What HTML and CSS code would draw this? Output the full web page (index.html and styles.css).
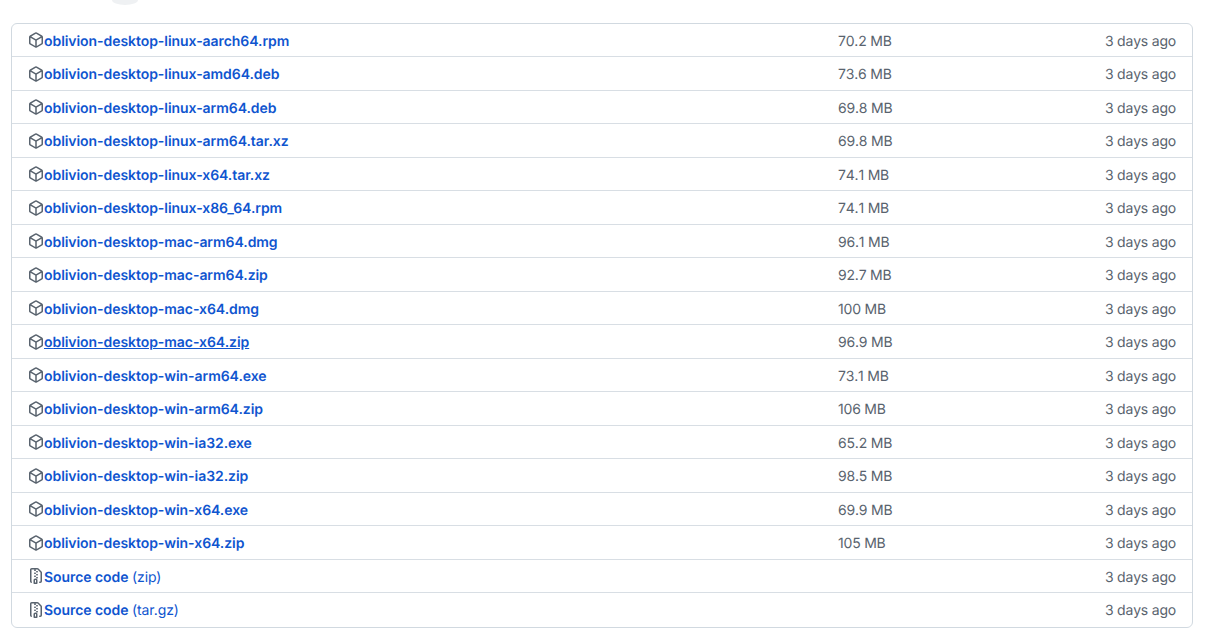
FILE: index.html
```html
<!DOCTYPE html>
<html lang="en">
<head>
<meta charset="utf-8">
<title>Assets</title>
<link rel="stylesheet" href="styles.css">
</head>
<body>
<svg class="sprites" width="0" height="0" aria-hidden="true">
<symbol id="pkg" viewBox="0 0 16 16"><path d="m8.878.392 5.25 3.045c.54.314.872.89.872 1.514v6.098a1.75 1.75 0 0 1-.872 1.514l-5.25 3.045a1.75 1.75 0 0 1-1.756 0l-5.25-3.045A1.75 1.75 0 0 1 1 11.049V4.951c0-.624.332-1.201.872-1.514L7.122.392a1.75 1.75 0 0 1 1.756 0ZM7.875 1.69l-4.63 2.685L8 7.133l4.755-2.758-4.63-2.685a.248.248 0 0 0-.25 0ZM2.5 5.677v5.372c0 .09.047.171.125.216l4.625 2.683V8.432Zm6.25 8.271 4.625-2.683a.25.25 0 0 0 .125-.216V5.677L8.75 8.432Z"/></symbol>
<symbol id="zip" viewBox="0 0 16 16"><path d="M3.5 1.75v11.5c0 .09.048.173.126.217a.75.75 0 0 1-.752 1.298A1.748 1.748 0 0 1 2 13.25V1.75C2 .784 2.784 0 3.75 0h5.586c.464 0 .909.185 1.237.513l2.914 2.914c.329.328.513.773.513 1.237v8.586A1.75 1.75 0 0 1 12.25 15h-.5a.75.75 0 0 1 0-1.5h.5a.25.25 0 0 0 .25-.25V4.664a.25.25 0 0 0-.073-.177L9.513 1.573a.25.25 0 0 0-.177-.073H7.25a.75.75 0 0 1 0 1.5h-.5a.75.75 0 0 1 0-1.5h-3a.25.25 0 0 0-.25.25Zm3.75 8.75h.5c.966 0 1.75.784 1.75 1.75v3a.75.75 0 0 1-.75.75h-2.5a.75.75 0 0 1-.75-.75v-3c0-.966.784-1.75 1.75-1.75ZM6 5.25a.75.75 0 0 1 .75-.75h.5a.75.75 0 0 1 0 1.5h-.5A.75.75 0 0 1 6 5.25Zm.75 2.25h.5a.75.75 0 0 1 0 1.5h-.5a.75.75 0 0 1 0-1.5ZM8 6.75A.75.75 0 0 1 8.75 6h.5a.75.75 0 0 1 0 1.5h-.5A.75.75 0 0 1 8 6.75ZM8.75 3h.5a.75.75 0 0 1 0 1.5h-.5a.75.75 0 0 1 0-1.5ZM8 9.75A.75.75 0 0 1 8.75 9h.5a.75.75 0 0 1 0 1.5h-.5A.75.75 0 0 1 8 9.75Zm-1 2.5v2.25h1v-2.25a.25.25 0 0 0-.25-.25h-.5a.25.25 0 0 0-.25.25Z"/></symbol>
</svg>
<div class="stub"></div>
<ul class="box">
<li class="row"><span class="name"><svg class="icon"><use href="#pkg"/></svg><a href="#">oblivion-desktop-linux-aarch64.rpm</a></span><span class="size">70.2 MB</span><span class="date">3 days ago</span></li>
<li class="row"><span class="name"><svg class="icon"><use href="#pkg"/></svg><a href="#">oblivion-desktop-linux-amd64.deb</a></span><span class="size">73.6 MB</span><span class="date">3 days ago</span></li>
<li class="row"><span class="name"><svg class="icon"><use href="#pkg"/></svg><a href="#">oblivion-desktop-linux-arm64.deb</a></span><span class="size">69.8 MB</span><span class="date">3 days ago</span></li>
<li class="row"><span class="name"><svg class="icon"><use href="#pkg"/></svg><a href="#">oblivion-desktop-linux-arm64.tar.xz</a></span><span class="size">69.8 MB</span><span class="date">3 days ago</span></li>
<li class="row"><span class="name"><svg class="icon"><use href="#pkg"/></svg><a href="#">oblivion-desktop-linux-x64.tar.xz</a></span><span class="size">74.1 MB</span><span class="date">3 days ago</span></li>
<li class="row"><span class="name"><svg class="icon"><use href="#pkg"/></svg><a href="#">oblivion-desktop-linux-x86_64.rpm</a></span><span class="size">74.1 MB</span><span class="date">3 days ago</span></li>
<li class="row"><span class="name"><svg class="icon"><use href="#pkg"/></svg><a href="#">oblivion-desktop-mac-arm64.dmg</a></span><span class="size">96.1 MB</span><span class="date">3 days ago</span></li>
<li class="row"><span class="name"><svg class="icon"><use href="#pkg"/></svg><a href="#">oblivion-desktop-mac-arm64.zip</a></span><span class="size">92.7 MB</span><span class="date">3 days ago</span></li>
<li class="row"><span class="name"><svg class="icon"><use href="#pkg"/></svg><a href="#">oblivion-desktop-mac-x64.dmg</a></span><span class="size">100 MB</span><span class="date">3 days ago</span></li>
<li class="row"><span class="name"><svg class="icon"><use href="#pkg"/></svg><a class="hover" href="#">oblivion-desktop-mac-x64.zip</a></span><span class="size">96.9 MB</span><span class="date">3 days ago</span></li>
<li class="row"><span class="name"><svg class="icon"><use href="#pkg"/></svg><a href="#">oblivion-desktop-win-arm64.exe</a></span><span class="size">73.1 MB</span><span class="date">3 days ago</span></li>
<li class="row"><span class="name"><svg class="icon"><use href="#pkg"/></svg><a href="#">oblivion-desktop-win-arm64.zip</a></span><span class="size">106 MB</span><span class="date">3 days ago</span></li>
<li class="row"><span class="name"><svg class="icon"><use href="#pkg"/></svg><a href="#">oblivion-desktop-win-ia32.exe</a></span><span class="size">65.2 MB</span><span class="date">3 days ago</span></li>
<li class="row"><span class="name"><svg class="icon"><use href="#pkg"/></svg><a href="#">oblivion-desktop-win-ia32.zip</a></span><span class="size">98.5 MB</span><span class="date">3 days ago</span></li>
<li class="row"><span class="name"><svg class="icon"><use href="#pkg"/></svg><a href="#">oblivion-desktop-win-x64.exe</a></span><span class="size">69.9 MB</span><span class="date">3 days ago</span></li>
<li class="row"><span class="name"><svg class="icon"><use href="#pkg"/></svg><a href="#">oblivion-desktop-win-x64.zip</a></span><span class="size">105 MB</span><span class="date">3 days ago</span></li>
<li class="row"><span class="name"><svg class="icon"><use href="#zip"/></svg><a href="#">Source code <span class="ext">(zip)</span></a></span><span class="size"></span><span class="date">3 days ago</span></li>
<li class="row"><span class="name"><svg class="icon"><use href="#zip"/></svg><a href="#">Source code <span class="ext">(tar.gz)</span></a></span><span class="size"></span><span class="date">3 days ago</span></li>
</ul>
</body>
</html>
```
FILE: styles.css
```css
* { box-sizing: border-box; }
html, body { margin: 0; padding: 0; background: #fff; }
body {
  font-family: Inter, "Liberation Sans", sans-serif;
  font-size: 14px;
  color: #59636e;
  overflow: hidden;
  text-rendering: geometricPrecision;
}
.sprites { display: block; position: absolute; }
.stub {
  width: 26px;
  height: 5px;
  margin-left: 112px;
  background: #eff1f3;
  border-radius: 0 0 13px 13px / 0 0 5px 5px;
}
.box {
  list-style: none;
  margin: 18px 13px 0 11px;
  padding: 0;
  border: 1px solid #d1d9e0;
  border-radius: 6px;
}
.row {
  display: grid;
  grid-template-columns: 1fr 218px 120px;
  align-items: center;
  height: 33.5px;
  padding: 2.5px 16px 0;
  border-top: 1px solid #d8dee4;
}
.row:first-child { border-top: 0; height: 32px; }
.row:last-child { height: 35px; padding-bottom: 1px; }
.name { display: flex; align-items: center; min-width: 0; }
.icon { width: 16px; height: 16px; fill: #59636e; flex: none; margin-top: -2px; }
.name a { color: #0f55cf; font-weight: 600; text-decoration: none; white-space: nowrap; letter-spacing: -0.06px; }
.name a.hover { text-decoration: underline; }
.ext { font-weight: 400; }
.size, .date { letter-spacing: -0.2px; font-kerning: none; }
.date { text-align: right; }
```
